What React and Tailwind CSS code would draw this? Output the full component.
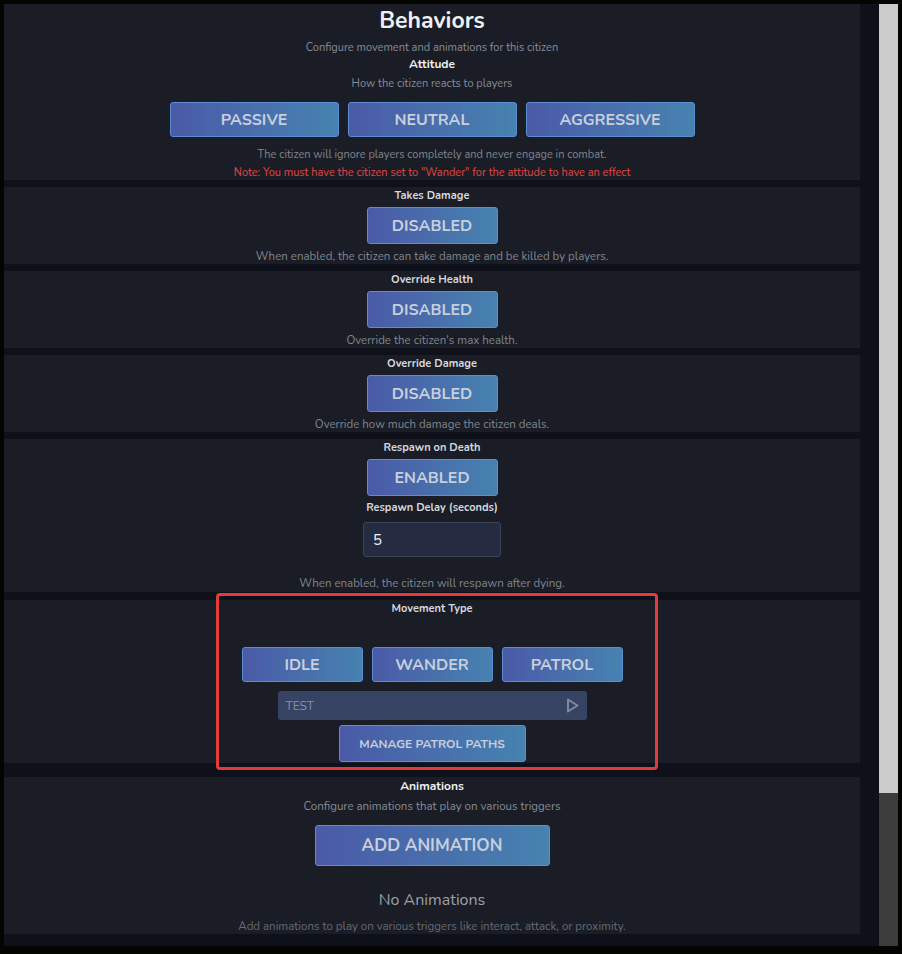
import { useState } from 'react';

const font = { fontFamily: '"Nunito", "Noto Sans", "Liberation Sans", sans-serif' };

function Btn({ children, className = '' }) {
  return (
    <button
      className={`flex items-center justify-center rounded-[3px] border border-[#5a8fd4] bg-gradient-to-r from-[#4a5aa7] to-[#4682b0] font-bold text-[#c7cfdd] ${className}`}
    >
      {children}
    </button>
  );
}

function Section({ className = '', children }) {
  return <div className={`flex w-[856px] flex-col items-center bg-[#1a1d25] ${className}`}>{children}</div>;
}

function ToggleSection({ title, value, desc }) {
  return (
    <Section className="h-[77px]">
      <div className="mt-[2px] text-[11px] leading-[14px] font-bold text-[#d4d7de]">{title}</div>
      <Btn className="mt-[4px] h-[37px] w-[131px] text-[16px]">{value}</Btn>
      <div className="mt-[5px] text-[11.5px] leading-[14px] text-[#80868f]">{desc}</div>
    </Section>
  );
}

export default function App() {
  const [delay, setDelay] = useState('5');
  return (
    <div className="h-[954px] w-[902px] overflow-hidden bg-[#040500] pt-[4px] pl-[4px]" style={font}>
      <div className="flex h-[942px]">
        {/* scroll area */}
        <div className="flex w-[875px] flex-col gap-[7px] bg-[#0e111a]">
          <Section className="h-[176px]">
            <h1 className="mt-[3px] text-[23px] leading-[28px] font-bold text-[#eef0f4]">Behaviors</h1>
            <p className="mt-[6px] text-[11px] leading-[14px] text-[#868c96]">Configure movement and animations for this citizen</p>
            <div className="mt-[1px] text-[12px] leading-[16px] font-bold text-[#eef0f4]">Attitude</div>
            <p className="mt-[5px] text-[11px] leading-[14px] text-[#868c96]">How the citizen reacts to players</p>
            <div className="mt-[11px] flex gap-[9px]">
              <Btn className="h-[35px] w-[169px] text-[16px]">PASSIVE</Btn>
              <Btn className="h-[35px] w-[169px] text-[16px]">NEUTRAL</Btn>
              <Btn className="h-[35px] w-[169px] text-[16px]">AGGRESSIVE</Btn>
            </div>
            <p className="mt-[11px] text-[11px] leading-[14px] text-[#80868f]">
              The citizen will ignore players completely and never engage in combat.
            </p>
            <p className="mt-[4px] text-[11px] leading-[14px] text-[#e24545]">
              Note: You must have the citizen set to "Wander" for the attitude to have an effect
            </p>
          </Section>

          <ToggleSection
            title="Takes Damage"
            value="DISABLED"
            desc="When enabled, the citizen can take damage and be killed by players."
          />
          <ToggleSection title="Override Health" value="DISABLED" desc="Override the citizen's max health." />
          <ToggleSection title="Override Damage" value="DISABLED" desc="Override how much damage the citizen deals." />

          <Section className="h-[153px]">
            <div className="mt-[2px] text-[11px] leading-[14px] font-bold text-[#d4d7de]">Respawn on Death</div>
            <Btn className="mt-[4px] h-[37px] w-[131px] text-[16px]">ENABLED</Btn>
            <div className="mt-[5px] text-[11px] leading-[14px] font-bold text-[#d4d7de]">Respawn Delay (seconds)</div>
            <input
              value={delay}
              onChange={(e) => setDelay(e.target.value)}
              className="mt-[7px] h-[35px] w-[138px] rounded-[3px] border border-[#3b4459] bg-[#252c41] px-[9px] text-[15px] text-[#eef0f4] outline-none"
              style={font}
            />
            <p className="mt-[19px] text-[11.5px] leading-[14px] text-[#80868f]">When enabled, the citizen will respawn after dying.</p>
          </Section>

          <div className="relative mt-[1px]">
            <Section className="h-[163px]">
              <div className="mt-[2px] text-[11px] leading-[14px] font-bold text-[#d4d7de]">Movement Type</div>
              <div className="mt-[31px] flex gap-[9px]">
                <Btn className="h-[35px] w-[121px] text-[16px]">IDLE</Btn>
                <Btn className="h-[35px] w-[121px] text-[16px]">WANDER</Btn>
                <Btn className="h-[35px] w-[121px] text-[16px]">PATROL</Btn>
              </div>
              <div className="mt-[9px] flex h-[29px] w-[309px] items-center justify-between rounded-[3px] bg-[#374362] pr-[8px] pl-[8px]">
                <span className="text-[12px] text-[#8892a8]">TEST</span>
                <svg width="13" height="15" viewBox="0 0 13 15" fill="none">
                  <path d="M2 1.5 L11.5 7.5 L2 13.5 Z" stroke="#7f899e" strokeWidth="2" strokeLinejoin="round" />
                </svg>
              </div>
              <Btn className="mt-[5px] h-[37px] w-[187px] text-[12px]">MANAGE PATROL PATHS</Btn>
            </Section>
            {/* annotation box */}
            <div className="pointer-events-none absolute top-[-7px] left-[212px] h-[177px] w-[442px] rounded-[4px] border-[3px] border-[#e53a3a]" />
          </div>

          <Section className="mt-[7px] h-[157px]">
            <div className="mt-[2px] text-[12px] leading-[14px] font-bold text-[#eef0f4]">Animations</div>
            <p className="mt-[6px] text-[11.5px] leading-[14px] text-[#868c96]">Configure animations that play on various triggers</p>
            <Btn className="mt-[12px] h-[41px] w-[235px] text-[17px]">ADD ANIMATION</Btn>
            <p className="mt-[24px] text-[16px] leading-[20px] text-[#9aa0aa]">No Animations</p>
            <p className="mt-[9px] text-[11.5px] leading-[14px] text-[#646a74]">
              Add animations to play on various triggers like interact, attack, or proximity.
            </p>
          </Section>
        </div>

        {/* scrollbar */}
        <div className="flex w-[19px] flex-col">
          <div className="h-[789px] bg-[#cbcbcb]" />
          <div className="flex-1 bg-[#3c3c3c]" />
        </div>
      </div>
    </div>
  );
}
